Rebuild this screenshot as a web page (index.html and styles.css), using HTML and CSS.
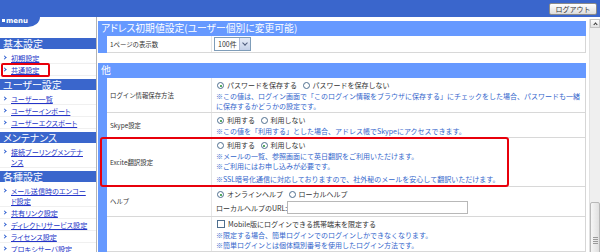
FILE: index.html
```html
<!DOCTYPE html>
<html lang="ja">
<head>
    <meta charset="UTF-8">
    <title>共通設定</title>
    <link rel="stylesheet" href="styles.css">
</head>
<body>
    <div class="topbar">
        <button class="logout">ログアウト</button>
    </div>

    <div class="main">
        <div class="side">
            <div class="menu-tab"><span class="dot"></span>menu</div>

            <div class="group">
                <div class="group-head">基本設定</div>
                <ul class="links">
                    <li><a href="#">初期設定</a></li>
                    <li class="marked"><a href="#">共通設定</a></li>
                </ul>
            </div>
            <div class="group">
                <div class="group-head">ユーザー設定</div>
                <ul class="links">
                    <li><a href="#">ユーザー一覧</a></li>
                    <li><a href="#">ユーザーインポート</a></li>
                    <li><a href="#">ユーザーエクスポート</a></li>
                </ul>
            </div>
            <div class="group">
                <div class="group-head">メンテナンス</div>
                <ul class="links">
                    <li><a href="#">接続プーリングメンテナ<br>ンス</a></li>
                </ul>
            </div>
            <div class="group">
                <div class="group-head">各種設定</div>
                <ul class="links">
                    <li><a href="#">メール送信時のエンコー<br>ド設定</a></li>
                    <li><a href="#">共有リンク設定</a></li>
                    <li><a href="#">ディレクトリサービス設定</a></li>
                    <li><a href="#">ライセンス設定</a></li>
                    <li><a href="#">プロキシサーバ設定</a></li>
                </ul>
            </div>
        </div>

        <div class="content">
            <div class="section">
                <div class="sec-head">アドレス初期値設定(ユーザー個別に変更可能)</div>
                <div class="sec-body">
                    <div class="row row-short">
                        <div class="label">1ページの表示数</div>
                        <div class="value">
                            <span class="select">100件<span class="arrow"></span></span>
                        </div>
                    </div>
                </div>
            </div>

            <div class="section">
                <div class="sec-head">他</div>
                <div class="sec-body">
                    <div class="row">
                        <div class="label">ログイン情報保存方法</div>
                        <div class="value">
                            <div class="opts">
                                <span class="radio on"></span>パスワードを保存する
                                <span class="radio"></span>パスワードを保存しない
                            </div>
                            <div class="note">※この値は、ログイン画面で「このログイン情報をブラウザに保存する」にチェックをした場合、パスワードも一緒に保存するかどうかの設定です。</div>
                        </div>
                    </div>
                    <div class="row">
                        <div class="label">Skype設定</div>
                        <div class="value">
                            <div class="opts">
                                <span class="radio on"></span>利用する
                                <span class="radio"></span>利用しない
                            </div>
                            <div class="note">※この値を「利用する」とした場合、アドレス帳でSkypeにアクセスできます。</div>
                        </div>
                    </div>
                    <div class="row flagged">
                        <div class="label">Excite翻訳設定</div>
                        <div class="value">
                            <div class="opts">
                                <span class="radio"></span>利用する
                                <span class="radio on"></span>利用しない
                            </div>
                            <div class="note">※メールの一覧、参照画面にて英日翻訳をご利用いただけます。</div>
                            <div class="note">※ご利用にはお申し込みが必要です。</div>
                            <div class="note gap">※SSL暗号化通信に対応しておりますので、社外秘のメールを安心して翻訳いただけます。</div>
                        </div>
                    </div>
                    <div class="row">
                        <div class="label">ヘルプ</div>
                        <div class="value">
                            <div class="opts">
                                <span class="radio on"></span>オンラインヘルプ
                                <span class="radio"></span>ローカルヘルプ
                            </div>
                            <div class="url">ローカルヘルプのURL:<span class="textbox"></span></div>
                        </div>
                    </div>
                    <div class="row">
                        <div class="label"></div>
                        <div class="value">
                            <div class="opts"><span class="check"></span>Mobile版にログインできる携帯端末を限定する</div>
                            <div class="note">※限定する場合、簡単ログインでのログインしかできなくなります。</div>
                            <div class="note">※簡単ログインとは個体識別番号を使用したログイン方法です。</div>
                        </div>
                    </div>
                </div>
            </div>
        </div>

        <div class="scrollbar">
            <div class="sb-up"></div>
            <div class="sb-track"></div>
            <div class="sb-thumb"><span class="grip"></span></div>
        </div>
    </div>
</body>
</html>
```

FILE: styles.css
```css
body {
    margin: 0;
    width: 600px;
    height: 252px;
    overflow: hidden;
    font-family: "Noto Sans CJK JP", "DejaVu Sans", sans-serif;
    color: #333;
    background: #fff;
}
.topbar {
    height: 17px;
    background: #3a66cc;
    display: flex;
    justify-content: flex-end;
    align-items: flex-start;
    padding: 3px 3px 0 0;
    box-sizing: border-box;
}
.logout {
    width: 48px;
    height: 12px;
    padding: 0;
    font-family: inherit;
    font-size: 7px;
    line-height: 10px;
    color: #333;
    border: 1px solid #8a8a8a;
    border-radius: 2px;
    background: linear-gradient(#ffffff, #dcdcdc);
}
.main {
    display: flex;
    height: 235px;
}

/* sidebar */
.side {
    width: 96px;
    border-right: 1px solid #b4b4b4;
    flex-shrink: 0;
    font-feature-settings: "palt";
}
.menu-tab {
    width: 40px;
    height: 10px;
    margin-bottom: 11px;
    background: #3a66cc;
    border-bottom-right-radius: 12px 10px;
    color: #fff;
    font-family: "DejaVu Sans", sans-serif;
    font-weight: bold;
    font-size: 7px;
    line-height: 9px;
    padding-left: 2px;
    box-sizing: border-box;
}
.menu-tab .dot {
    display: inline-block;
    width: 3px;
    height: 3px;
    background: #fff;
    margin-right: 1px;
    vertical-align: 1px;
}
.group-head {
    height: 11px;
    line-height: 11px;
    background: #3a66cc;
    color: #fff;
    font-size: 10px;
    padding-left: 3px;
}
.links {
    list-style: none;
    margin: 0;
    padding: 3px 0;
}
.links li {
    position: relative;
    padding: 0.5px 0 0.5px 11px;
    line-height: 10px;
    font-size: 7.1px;
    white-space: nowrap;
    border-bottom: 1px solid #f0f0f0;
}
.links li::before {
    content: '';
    position: absolute;
    left: 3px;
    top: 3.5px;
    width: 2px;
    height: 2px;
    border-top: 1.5px solid #2f5fd0;
    border-right: 1.5px solid #2f5fd0;
    transform: rotate(45deg);
}
.links a {
    color: #2434c8;
    text-decoration: underline;
}
.links li.marked::after {
    content: '';
    position: absolute;
    left: 1px;
    top: -1px;
    width: 49px;
    height: 14px;
    border: 2px solid #e8000b;
    border-radius: 2px;
    box-sizing: border-box;
}

/* content */
.content {
    flex: 1;
    padding: 4px 3px 0 1px;
    min-width: 0;
}
.section {
    margin-bottom: 10px;
}
.sec-head {
    height: 15px;
    line-height: 15px;
    background: #6699ff;
    color: #fff;
    font-size: 9.8px;
    padding-left: 3px;
    font-feature-settings: "palt";
}
.sec-body {
    border-left: 9px solid #6699ff;
    border-right: 1px solid #d6d6d6;
}
.row {
    position: relative;
    display: grid;
    grid-template-columns: 105px 1fr;
    border-bottom: 1px solid #d8d8d8;
}
.row-short {
    height: 17px;
    box-sizing: border-box;
}
.label {
    display: flex;
    align-items: center;
    padding-left: 3px;
    font-size: 6.4px;
    border-right: 1px solid #e6e6e6;
}
.value {
    padding: 2px 0 1px 4px;
    font-size: 7px;
}
.row-short .value {
    padding: 1px 2px;
}
.opts {
    line-height: 11px;
    height: 11px;
    white-space: nowrap;
}
.radio {
    display: inline-block;
    width: 7px;
    height: 7px;
    border: 1px solid #4f6f8f;
    border-radius: 50%;
    background: #fff;
    box-sizing: border-box;
    vertical-align: -1px;
    margin: 0 3px 0 1px;
    position: relative;
}
.opts .radio:not(:first-child) {
    margin-left: 4px;
}
.radio.on::after {
    content: '';
    position: absolute;
    left: 1.5px;
    top: 1.5px;
    width: 2px;
    height: 2px;
    border-radius: 50%;
    background: #1f8f2f;
}
.check {
    display: inline-block;
    width: 8px;
    height: 8px;
    border: 1px solid #4f6f8f;
    background: #fff;
    box-sizing: border-box;
    vertical-align: -1px;
    margin: 0 3px 0 1px;
}
.note {
    color: #3366cc;
    line-height: 10px;
}
.note.gap {
    margin-top: 3px;
    padding-bottom: 1px;
}
.url {
    display: flex;
    align-items: center;
    height: 15px;
}
.textbox {
    display: inline-block;
    width: 181px;
    height: 13px;
    border: 1px solid #b8b8b8;
    box-sizing: border-box;
    background: #fff;
}
.select {
    display: inline-flex;
    align-items: center;
    justify-content: space-between;
    width: 37px;
    height: 14px;
    border: 1px solid #7f9db9;
    box-sizing: border-box;
    padding-left: 3px;
    font-size: 7px;
    color: #333;
    background: #fff;
}
.arrow {
    width: 10px;
    height: 12px;
    background: linear-gradient(#e6ecf8, #c4d0e8);
    border-left: 1px solid #b0bcd8;
    position: relative;
}
.arrow::after {
    content: '';
    position: absolute;
    left: 3px;
    top: 3px;
    width: 3px;
    height: 3px;
    border-right: 1.5px solid #4d5b7c;
    border-bottom: 1.5px solid #4d5b7c;
    transform: rotate(45deg);
}
.flagged::after {
    content: '';
    position: absolute;
    left: -7px;
    top: -1px;
    width: 409px;
    height: 50px;
    border: 2px solid #e8000b;
    border-radius: 3px;
    box-sizing: border-box;
}

/* scrollbar */
.scrollbar {
    width: 10px;
    margin-top: 2px;
    background: #efefef;
    border-left: 1px solid #e2e2e2;
    overflow: hidden;
    flex-shrink: 0;
}
.sb-up {
    height: 9px;
    border: 1px solid #c4c4c4;
    box-sizing: border-box;
    background: linear-gradient(#fdfdfd, #e2e2e2);
    position: relative;
}
.sb-up::after {
    content: '';
    position: absolute;
    left: 2.5px;
    top: 3px;
    width: 2px;
    height: 2px;
    border-left: 1.5px solid #333;
    border-top: 1.5px solid #333;
    transform: rotate(45deg);
}
.sb-track {
    height: 174px;
}
.sb-thumb {
    height: 80px;
    border: 1px solid #b8b8b8;
    border-radius: 2px;
    box-sizing: border-box;
    background: linear-gradient(90deg, #f6f6f6, #e0e0e0);
    display: flex;
    justify-content: center;
    padding-top: 34px;
}
.grip {
    width: 5px;
    height: 7px;
    background: repeating-linear-gradient(#9a9a9a 0 1px, transparent 1px 2px);
}
```
